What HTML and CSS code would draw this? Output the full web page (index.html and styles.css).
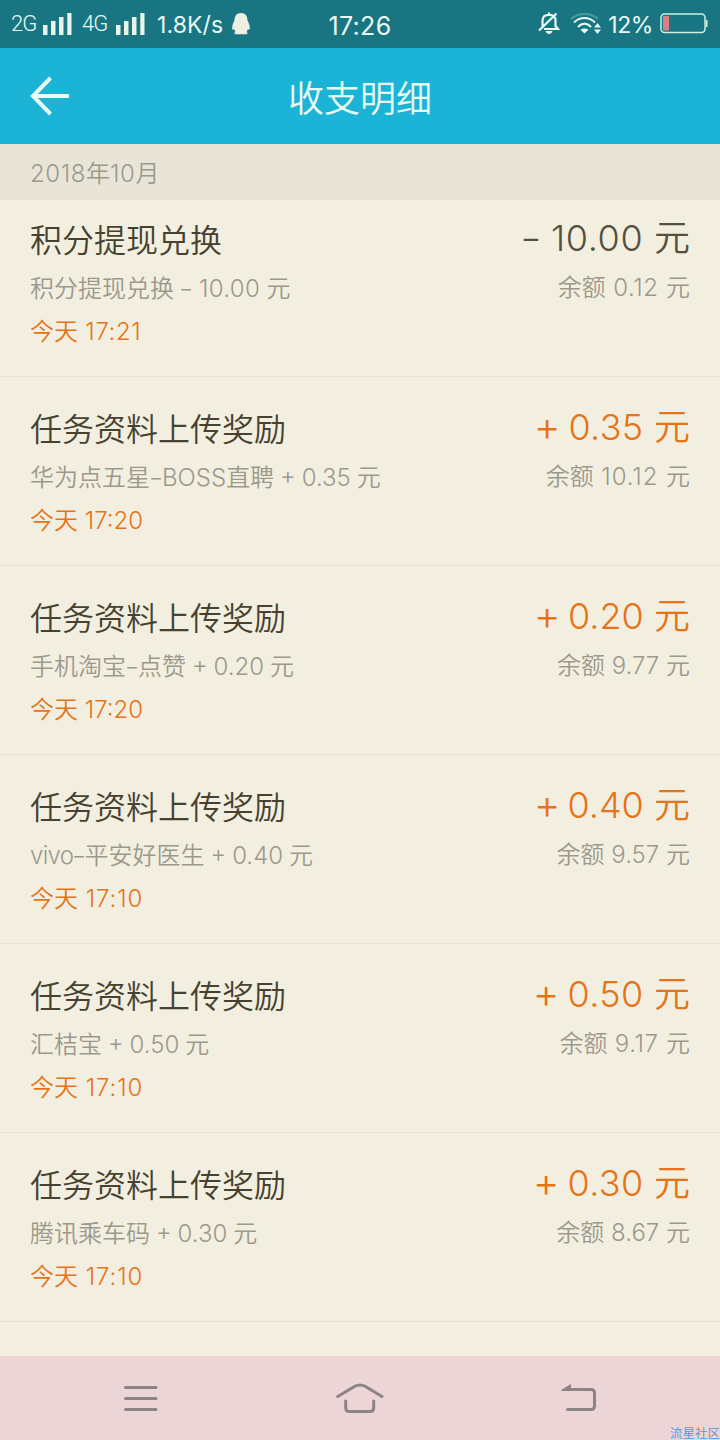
FILE: index.html
```
<!DOCTYPE html>
<html lang="zh-CN">
<head>
<meta charset="utf-8">
<title>收支明细</title>
<link rel="stylesheet" href="styles.css">
</head>
<body>
<div class="screen">
  <div class="status">
    <div class="status-left">
      <span class="net">2G</span>
      <svg class="bars" width="29" height="22" viewBox="0 0 29 22"><path d="M0 12h4.500v10H0zM8 8h4.500v14H8zM16 4h4.500v18H16zM24.300 0h4.200v22h-4.200z"/></svg>
      <span class="net net-second">4G</span>
      <svg class="bars" width="29" height="22" viewBox="0 0 29 22"><path d="M0 12h4.500v10H0zM8 8h4.500v14H8zM16 4h4.500v18H16zM24.300 0h4.200v22h-4.200z"/></svg>
      <span class="speed">1.8K/s</span>
      <svg class="penguin" width="18" height="22" viewBox="0 0 18 22"><path d="M9 0C4.500 0 2.500 3 2.500 7.500C1 10 0 13 0.200 16C0.500 17.200 1.500 16.800 2.200 16C2.500 17.500 3 18.500 3.600 19C2 19.500 2 21.300 4 21.300H14C16 21.300 16 19.500 14.400 19C15 18.500 15.500 17.500 15.800 16C16.500 16.800 17.500 17.200 17.800 16C18 13 17 10 15.500 7.500C15.500 3 13.500 0 9 0Z"/></svg>
    </div>
    <span class="clock">17:26</span>
    <div class="status-right">
      <svg class="bell" width="22" height="23" viewBox="0 0 22 23"><path d="M4.500 13V8.500C4.500 4.500 7 2.800 11 2.800S17.500 4.500 17.500 8.500V14L20 17H6M11 .5V3M1 18.500L18.500 1.500M4.500 11V14" fill="none" stroke="#e9fbf5" stroke-width="2.200"/><path d="M7.500 19h7q-1 3-3.500 3t-3.500-3z" fill="#e9fbf5"/></svg>
      <svg class="wifi" width="31" height="22" viewBox="0 0 31 22"><g fill="none" stroke-width="2"><path d="M1 6C8-.8 21-.8 28 6" stroke="#4b9a9e"/><path d="M4 9.500C10 3.500 19 3.500 25 9.500M8 14C12 9.800 17 9.800 21 14" stroke="#e9fbf5"/></g><path d="M10.500 16.800q4-2.500 8 0L14.500 20.500zM24 14.500L27.500 10l3.500 4.500zM24 16.500L27.500 21l3.500-4.500z" fill="#e9fbf5"/></svg>
      <span class="percent">12%</span>
      <svg class="battery" width="48" height="22" viewBox="0 0 48 22"><rect x="1" y="1" width="44" height="18.500" rx="3.500" fill="none" stroke="#c9f3df" stroke-width="1.500"/><path d="M46 7h1.500v7H46z" fill="#c9f3df"/><path d="M3 3h6v14.500H3z" fill="#dc7f84"/></svg>
    </div>
  </div>
  <header class="header">
    <svg class="back" width="40" height="40" viewBox="0 0 40 40"><path d="M20.500 2L3 20L20.500 38M3 20H39" fill="none" stroke="#e9fbf5" stroke-width="4"/></svg>
    <h1 class="heading">收支明细</h1>
  </header>
  <div class="month"><span class="s6">2018</span>年<span class="s6">10</span>月</div>
  <main class="list">
    <section class="row first">
      <div class="info"><div class="title">积分提现兑换</div><div class="desc">积分提现兑换<span class="s3"> <span class="dash">–</span> 10.00 </span>元</div><div class="time">今天<span class="s6"> 17:21</span></div></div>
      <div class="money"><div class="amount out"><span class="s6"><span class="dash">–</span> 10.00 </span>元</div><div class="balance">余额<span class="s6"> 0.12 </span>元</div></div>
    </section>
    <section class="row">
      <div class="info"><div class="title">任务资料上传奖励</div><div class="desc">华为点五星<span><span class="dash">–</span>BOSS</span>直聘<span> + 0.35 </span>元</div><div class="time">今天<span> 17:20</span></div></div>
      <div class="money"><div class="amount"><span class="s3"><span class="plus">+</span> 0.35 </span>元</div><div class="balance">余额<span class="s9"> 10.12 </span>元</div></div>
    </section>
    <section class="row">
      <div class="info"><div class="title">任务资料上传奖励</div><div class="desc">手机淘宝<span class="dash">–</span>点赞<span> + 0.20 </span>元</div><div class="time">今天<span> 17:20</span></div></div>
      <div class="money"><div class="amount"><span><span class="plus">+</span> 0.20 </span>元</div><div class="balance">余额<span> 9.77 </span>元</div></div>
    </section>
    <section class="row">
      <div class="info"><div class="title">任务资料上传奖励</div><div class="desc"><span class="vivo">vivo<span class="dash">–</span></span>平安好医生<span> + 0.40 </span>元</div><div class="time">今天<span class="s9"> 17:10</span></div></div>
      <div class="money"><div class="amount"><span><span class="plus">+</span> 0.40 </span>元</div><div class="balance">余额<span> 9.57 </span>元</div></div>
    </section>
    <section class="row">
      <div class="info"><div class="title">任务资料上传奖励</div><div class="desc">汇桔宝<span> + 0.50 </span>元</div><div class="time">今天<span class="s9"> 17:10</span></div></div>
      <div class="money"><div class="amount"><span class="s3"><span class="plus">+</span> 0.50 </span>元</div><div class="balance">余额<span class="s6"> 9.17 </span>元</div></div>
    </section>
    <section class="row">
      <div class="info"><div class="title">任务资料上传奖励</div><div class="desc">腾讯乘车码<span> + 0.30 </span>元</div><div class="time">今天<span class="s9"> 17:10</span></div></div>
      <div class="money"><div class="amount"><span class="s3"><span class="plus">+</span> 0.30 </span>元</div><div class="balance">余额<span> 8.67 </span>元</div></div>
    </section>
  </main>
  <nav class="nav">
    <svg class="menu" width="34" height="28" viewBox="0 0 34 28"><path d="M1.500 2.500h30.500M1.500 13.500h30.500M1.500 24.500h30.500"/></svg>
    <svg class="home" width="48" height="32" viewBox="0 0 48 32"><path d="M1.700 14.500L18.500 4.500Q24 1.500 29.500 4.500L46 14.500M9.700 19v7q0 3.500 3.500 3.500h21q3.500 0 3.500-3.500v-7"/></svg>
    <svg class="return" width="36" height="30" viewBox="0 0 36 30"><path d="M5 6.500h25q3.500 0 3.500 3.500v13q0 3.500-3.500 3.500H6.500"/><path class="tip" d="M0 7L10 1V8H1Z"/></svg>
    <span class="community">流星社区</span>
  </nav>
</div>
</body>
</html>
```
FILE: styles.css
```
body { margin: 0; }
.screen {
  width: 720px; height: 1440px; overflow: hidden;
  display: flex; flex-direction: column;
  background: #f3efe0; color: #9c998c;
  font-family: Inter, "Noto Sans CJK SC DemiLight", "Noto Sans CJK SC", sans-serif; font-weight: 350;
}
.status {
  height: 48px; flex: none; background: #1a7583; color: #e9fbf5;
  display: grid; grid-template-columns: 1fr auto 1fr; align-items: center;
  font-weight: 400; line-height: 48px; white-space: nowrap;
}
.status-left { display: flex; align-items: center; padding-left: 11px; }
.net { font-family: Roboto, sans-serif; font-size: 22px; font-weight: 350; width: 32px; letter-spacing: -1px; margin-top: -2px; }
.net-second { margin-left: 10px; width: 34px; }
.bars, .penguin { margin-top: -2px; }
.bars { fill: #e8f5e8; }
.speed { font-size: 23px; margin: -1px 0 0 12px; width: 75px; letter-spacing: 0.1px; }
.penguin { fill: #efeee2; }
.clock { font-size: 25px; padding-top: 2px; letter-spacing: 0.3px; }
.status-right { display: flex; align-items: center; justify-content: flex-end; padding-right: 12px; }
.bell, .wifi { margin-top: -3px; }
.wifi { margin-left: 10px; }
.percent { font-size: 23px; margin: -1px 7px 0 7px; letter-spacing: -0.4px; }
.battery { margin-top: -2px; }
.header {
  height: 96px; flex: none; background: #1bb4d6; color: #e9fbf5;
  display: grid; grid-template-columns: 70px 1fr 70px; align-items: center;
}
.back { margin-left: 30px; }
.heading { margin: 6px 0 0; text-align: center; font-size: 36px; line-height: 52px; font-weight: 350; }
.month { height: 56px; flex: none; background: #e8e5d8; padding-left: 30px; font-size: 24px; line-height: 60px; }
.row {
  display: flex; justify-content: space-between; height: 188px;
  padding: 0 30px; border-bottom: 1px solid #e4e1d4; white-space: pre;
}
.first { height: 176px; }
.info { padding-top: 32px; }
.money { padding-top: 29px; text-align: right; }
.first .info { padding-top: 20px; }
.first .money { padding-top: 17px; }
.title { font-size: 32px; line-height: 42px; color: #46422f; }
.desc { font-size: 24px; line-height: 34px; margin-top: 10px; word-spacing: -0.8px; }
.time { font-size: 24px; line-height: 34px; margin-top: 9px; color: #e77317; }
.amount { font-size: 36px; line-height: 42px; color: #e77317; }
.out { color: #55503e; }
.balance { font-size: 24px; line-height: 34px; margin-top: 12px; }
.s3 { letter-spacing: 0.35px; }
.s6 { letter-spacing: 0.6px; }
.s9 { letter-spacing: 0.9px; }
.vivo { letter-spacing: -0.7px; }
.dash { display: inline-block; transform: scaleX(0.8); }
.plus { display: inline-block; transform: translate(1.5px, -1px) scale(1.14); }
.nav {
  height: 84px; flex: none; margin-top: auto; background: #ecd5d7; position: relative;
  display: flex; align-items: center; justify-content: space-between; padding: 0 123px 0 123.500px; box-sizing: border-box;
}
.nav svg { fill: none; stroke: #8c8483; stroke-width: 3; stroke-linecap: round; }
.nav .menu { margin-top: 2px; }
.nav .home { margin-left: 1px; }
.nav .tip { fill: #8c8483; stroke: none; }
.community { position: absolute; right: 0; bottom: 0; font-size: 12.5px; line-height: 13px; font-weight: 400; color: #4a98e0; }
```
